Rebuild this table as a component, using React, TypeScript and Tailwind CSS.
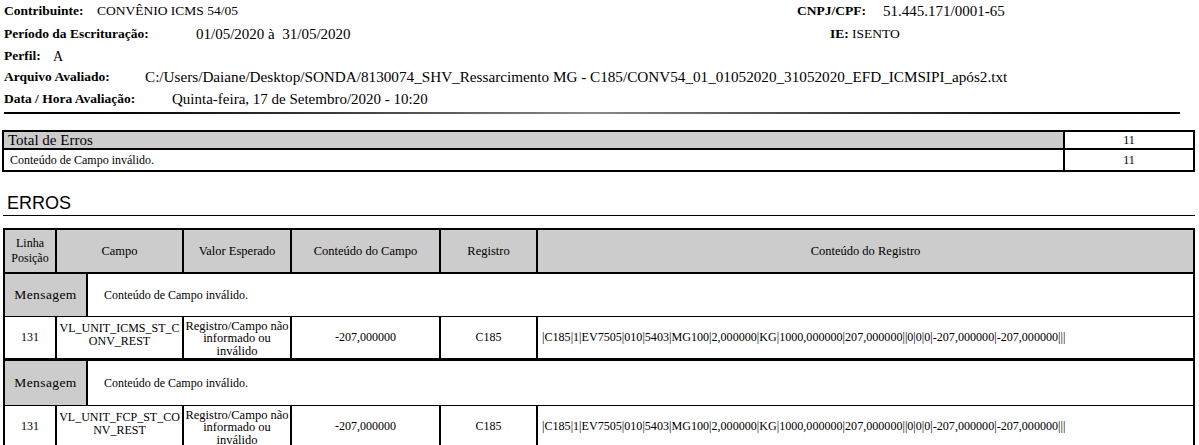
const headerRows = [
  { label: "Contribuinte:", labelW: "w-[93px]", value: "CONVÊNIO ICMS 54/05", size: "text-[13.5px]", h: "h-[22px]" },
  { label: "Período da Escrituração:", labelW: "w-[192px]", value: "01/05/2020 à  31/05/2020", size: "text-[15px]", h: "h-[24px]" },
  { label: "Perfil:", labelW: "w-[49px]", value: "A", size: "text-[14px]", h: "h-[21px]" },
  {
    label: "Arquivo Avaliado:",
    labelW: "w-[141px]",
    value:
      "C:/Users/Daiane/Desktop/SONDA/8130074_SHV_Ressarcimento MG - C185/CONV54_01_01052020_31052020_EFD_ICMSIPI_após2.txt",
    size: "text-[15.2px]",
    h: "h-[21px]",
  },
  {
    label: "Data / Hora Avaliação:",
    labelW: "w-[168px]",
    value: "Quinta-feira, 17 de Setembro/2020 - 10:20",
    size: "text-[15px]",
    h: "h-[22px]",
  },
];

const registro =
  "|C185|1|EV7505|010|5403|MG100|2,000000|KG|1000,000000|207,000000||0|0|0|-207,000000|-207,000000|||";

const erros = [
  { linha: "131", campo: ["VL_UNIT_ICMS_ST_C", "ONV_REST"] },
  { linha: "131", campo: ["VL_UNIT_FCP_ST_CO", "NV_REST"] },
];

function MensagemRow({ last }: { last?: boolean }) {
  return (
    <div className={`flex border-b border-black ${last ? "h-[45px]" : "h-[43px]"}`}>
      <div className="w-[85px] border-x-2 border-black bg-[#cccccc] flex items-center justify-center text-[13.5px] tracking-[0.4px]">
        Mensagem
      </div>
      <div className="flex-1 border-r-2 border-black flex items-center pl-[16px] text-[12px]">
        Conteúdo de Campo inválido.
      </div>
    </div>
  );
}

function DataRow({ linha, campo }: { linha: string; campo: string[] }) {
  return (
    <div className="flex h-[44px] border-b-[3px] border-black text-[12px] leading-[12.5px]">
      <div className="w-[54px] border-x-2 border-black flex items-center justify-center">{linha}</div>
      <div className="w-[127px] border-r-2 border-black flex flex-col items-center justify-center pb-[6px]">
        {campo.map((c) => (
          <span key={c}>{c}</span>
        ))}
      </div>
      <div className="w-[108px] border-r-2 border-black flex flex-col items-center justify-center pt-[2px] text-[12.5px]">
        <span>Registro/Campo não</span>
        <span>informado ou</span>
        <span>inválido</span>
      </div>
      <div className="w-[149px] border-r-2 border-black flex items-center justify-center">-207,000000</div>
      <div className="w-[97px] border-r-2 border-black flex items-center justify-center">C185</div>
      <div className="flex-1 border-r-2 border-black flex items-center pl-[4px] whitespace-nowrap overflow-hidden text-[12.1px]">
        {registro}
      </div>
    </div>
  );
}

export default function App() {
  return (
    <div className="w-[1199px] h-[445px] overflow-hidden bg-white text-black font-['Liberation_Serif',serif]">
      {/* Cabeçalho */}
      <div className="flex">
        <div className="w-[793px] pl-[4px]">
          {headerRows.map((r) => (
            <div key={r.label} className={`flex items-center whitespace-pre ${r.h}`}>
              <span className={`font-bold shrink-0 text-[13.5px] ${r.labelW}`}>{r.label}</span>
              <span className={r.size}>{r.value}</span>
            </div>
          ))}
        </div>
        <div className="pl-[4px]">
          <div className="flex items-center h-[22px] whitespace-nowrap">
            <span className="font-bold shrink-0 w-[86px] text-[13.5px]">CNPJ/CPF:</span>
            <span className="text-[15px]">51.445.171/0001-65</span>
          </div>
          <div className="flex items-center h-[24px] whitespace-nowrap pl-[33px]">
            <span className="font-bold shrink-0 w-[18px] text-[13.5px] mr-[4px]">IE:</span>
            <span className="text-[13.5px]">ISENTO</span>
          </div>
        </div>
      </div>
      <div className="ml-[4px] mt-[2px] w-[1176px] h-[2px] bg-gradient-to-r from-black via-[#8a8a8a] to-black" />

      {/* Total de Erros */}
      <div className="ml-[2px] mt-[16px] w-[1193px] border-2 border-black">
        <div className="flex h-[16px]">
          <div className="flex-1 bg-[#cccccc] pl-[4px] text-[15px] leading-[16px]">Total de Erros</div>
          <div className="w-[130px] border-l-2 border-black flex items-center justify-center text-[12px]">11</div>
        </div>
        <div className="flex h-[22px] border-t-2 border-black">
          <div className="flex-1 pl-[6px] flex items-center text-[12px]">Conteúdo de Campo inválido.</div>
          <div className="w-[130px] border-l-2 border-black flex items-center justify-center text-[12px]">11</div>
        </div>
      </div>

      {/* ERROS */}
      <div className="ml-[3px] mt-[18px] w-[1192px] h-[26px] border-b border-black flex items-end pl-[4px] pb-[2px] font-['Liberation_Sans',sans-serif] text-[18px] leading-[20px]">
        ERROS
      </div>

      <div className="ml-[3px] mt-[12px] w-[1192px] border-t-2 border-black">
        <div className="flex h-[44px] border-b-2 border-black bg-[#cccccc] text-[12.5px]">
          <div className="w-[54px] border-x-2 border-black flex flex-col items-center justify-center leading-[15px] text-[12px]">
            <span>Linha</span>
            <span>Posição</span>
          </div>
          <div className="w-[127px] border-r-2 border-black flex items-center justify-center">Campo</div>
          <div className="w-[108px] border-r-2 border-black flex items-center justify-center">Valor Esperado</div>
          <div className="w-[149px] border-r-2 border-black flex items-center justify-center">Conteúdo do Campo</div>
          <div className="w-[97px] border-r-2 border-black flex items-center justify-center">Registro</div>
          <div className="flex-1 border-r-2 border-black flex items-center justify-center">Conteúdo do Registro</div>
        </div>
        <MensagemRow />
        <DataRow linha={erros[0].linha} campo={erros[0].campo} />
        <MensagemRow last />
        <DataRow linha={erros[1].linha} campo={erros[1].campo} />
      </div>
    </div>
  );
}
